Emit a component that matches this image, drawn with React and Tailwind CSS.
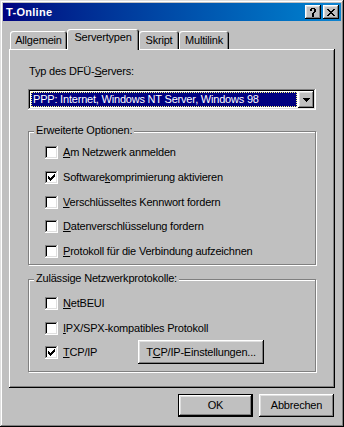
import React from "react";

const raised =
  "shadow-[inset_-1px_-1px_#000,inset_1px_1px_#fff,inset_-2px_-2px_#808080,inset_2px_2px_#dfdfdf]";
const sunken =
  "shadow-[inset_-1px_-1px_#fff,inset_1px_1px_#808080,inset_-2px_-2px_#dfdfdf,inset_2px_2px_#000]";

function Check({ checked }) {
  return (
    <div
      className={`w-[13px] h-[13px] bg-white shrink-0 flex items-center justify-center ${sunken}`}
    >
      {checked && (
        <svg width="7" height="7" viewBox="0 0 7 7" shapeRendering="crispEdges">
          <path
            d="M7 0H6V1H5V2H4V3H3V4H2V3H1V2H0V5H1V6H2V7H3V6H4V5H5V4H6V3H7V0Z"
            fill="#000"
          />
        </svg>
      )}
    </div>
  );
}

function Row({ checked, children, className = "" }) {
  return (
    <div className={`flex items-center h-[13px] ${className}`}>
      <Check checked={checked} />
      <span className="ml-[5px] leading-[13px] whitespace-nowrap">{children}</span>
    </div>
  );
}

function Tab({ children, selected, w }) {
  if (selected) {
    return (
      <div
        className={`relative z-10 h-[21px] mb-[-1px] ${w} bg-[#c0c0c0] rounded-t-[3px] shadow-[inset_1px_1px_#fff,inset_-1px_0_#000,inset_-2px_0_#808080] flex justify-center pt-[2px] leading-[13px]`}
      >
        {children}
      </div>
    );
  }
  return (
    <div
      className={`h-[18px] ${w} bg-[#c0c0c0] rounded-t-[3px] shadow-[inset_1px_1px_#fff,inset_-1px_0_#000,inset_-2px_0_#808080] flex justify-center pt-[2px] leading-[13px]`}
    >
      {children}
    </div>
  );
}

export default function App() {
  return (
    <div
      className={`w-[344px] h-[427px] bg-[#c0c0c0] p-[3px] flex flex-col text-[11px] tracking-[-0.2px] text-black font-['Liberation_Sans',Arial,sans-serif] shadow-[inset_-1px_-1px_#000,inset_1px_1px_#dfdfdf,inset_-2px_-2px_#808080,inset_2px_2px_#fff]`}
    >
      {/* Title bar */}
      <div className="h-[18px] shrink-0 flex items-center bg-linear-to-r from-[#000080] to-[#1084d0] pl-[3px] pr-[2px]">
        <span className="text-white font-bold text-[11px] tracking-[0.3px] leading-[13px]">
          T-Online
        </span>
        <div className="ml-auto flex gap-[2px]">
          <div className={`w-[16px] h-[14px] bg-[#c0c0c0] flex items-center justify-center ${raised}`}>
            <svg width="6" height="9" viewBox="0 0 6 9" shapeRendering="crispEdges">
              <path
                d="M1 0h4v1h1v3H5v1H4v2H2V5h1V4h1V1H2v2H0V1h1z M2 7h2v2H2z"
                fill="#000"
              />
            </svg>
          </div>
          <div className={`w-[16px] h-[14px] bg-[#c0c0c0] flex items-center justify-center ${raised}`}>
            <svg width="8" height="7" viewBox="0 0 8 7" shapeRendering="crispEdges">
              <path
                d="M0 0h2v1h1v1h2V1h1V0h2v1H7v1H6v1H5v1h1v1h1v1h1v1H6V6H5V5H3v1H2v1H0V6h1V5h1V4h1V3H2V2H1V1H0z"
                fill="#000"
              />
            </svg>
          </div>
        </div>
      </div>

      {/* Tabs */}
      <div className="mt-[8px] h-[20px] flex items-end pl-[7px] shrink-0">
        <Tab w="w-[57px]">
          <span className="pt-[1px]">Allgemein</span>
        </Tab>
        <Tab w="w-[72px]" selected>
          Servertypen
        </Tab>
        <Tab w="w-[40px]">
          <span className="pt-[1px]">Skript</span>
        </Tab>
        <Tab w="w-[50px]">
          <span className="pt-[1px]">Multilink</span>
        </Tab>
      </div>

      {/* Panel */}
      <div className="ml-[6px] w-[326px] h-[339px] shrink-0 shadow-[inset_-1px_-1px_#000,inset_1px_1px_#fff,inset_-2px_-2px_#808080] pl-[19px] pt-[16px] flex flex-col">
        <div className="h-[13px] leading-[13px] pl-[1px]">
          Typ des DFÜ-<u>S</u>ervers:
        </div>

        {/* Combo */}
        <div className={`mt-[11px] w-[288px] h-[21px] bg-white p-[2px] flex ${sunken}`}>
          <div className="flex-1 p-[1px] flex">
            <div className="flex-1 bg-[#000080] text-white border border-dotted border-[#ffff80] pl-[1px] leading-[13px] flex items-center">
              PPP: Internet, Windows NT Server, Windows 98
            </div>
          </div>
          <div className={`w-[16px] h-[17px] bg-[#c0c0c0] flex items-center justify-center ${raised}`}>
            <svg width="7" height="4" viewBox="0 0 7 4" shapeRendering="crispEdges">
              <path d="M0 0h7v1H6v1H5v1H4v1H3V3H2V2H1V1H0z" fill="#000" />
            </svg>
          </div>
        </div>

        {/* Group 1 */}
        <div className="mt-[21px] w-[288px] h-[134px] relative border border-[#808080] shadow-[inset_1px_1px_#fff,1px_1px_#fff] pl-[16px] pt-[14px]">
          <span className="absolute left-[5px] top-[-8px] bg-[#c0c0c0] px-[2px] leading-[13px]">
            Erweiterte Optionen:
          </span>
          <Row>
            <u>A</u>m Netzwerk anmelden
          </Row>
          <Row checked className="mt-[12px]">
            Software<u>k</u>omprimierung aktivieren
          </Row>
          <Row className="mt-[12px]">
            <u>V</u>erschlüsseltes Kennwort fordern
          </Row>
          <Row className="mt-[11px]">
            <u>D</u>atenverschlüsselung fordern
          </Row>
          <Row className="mt-[12px]">
            <u>P</u>rotokoll für die Verbindung aufzeichnen
          </Row>
        </div>

        {/* Group 2 */}
        <div className="mt-[14px] w-[288px] h-[93px] relative border border-[#808080] shadow-[inset_1px_1px_#fff,1px_1px_#fff] pl-[16px] pt-[17px]">
          <span className="absolute left-[5px] top-[-8px] bg-[#c0c0c0] px-[2px] leading-[13px]">
            Zulässige Netzwerkprotokolle:
          </span>
          <Row>
            <u>N</u>etBEUI
          </Row>
          <Row className="mt-[12px]">
            <u>I</u>PX/SPX-kompatibles Protokoll
          </Row>
          <div className="mt-[5px] flex items-center h-[24px]">
            <div className="w-[93px] flex items-center">
              <Check checked />
              <span className="ml-[5px] leading-[13px]">
                <u>T</u>CP/IP
              </span>
            </div>
            <div className={`w-[126px] h-[24px] bg-[#c0c0c0] flex items-center justify-center leading-[13px] ${raised}`}>
              T<u>C</u>P/IP-Einstellungen...
            </div>
          </div>
        </div>
      </div>

      {/* Bottom buttons */}
      <div className="mt-[6px] flex justify-end gap-[6px] pr-[7px]">
        <div className="w-[75px] h-[23px] border border-black bg-[#c0c0c0] shadow-[inset_-1px_-1px_#000,inset_1px_1px_#fff,inset_-2px_-2px_#808080,inset_2px_2px_#dfdfdf] flex items-center justify-center leading-[13px]">
          OK
        </div>
        <div className={`w-[75px] h-[23px] bg-[#c0c0c0] flex items-center justify-center leading-[13px] ${raised}`}>
          Abbrechen
        </div>
      </div>
    </div>
  );
}
